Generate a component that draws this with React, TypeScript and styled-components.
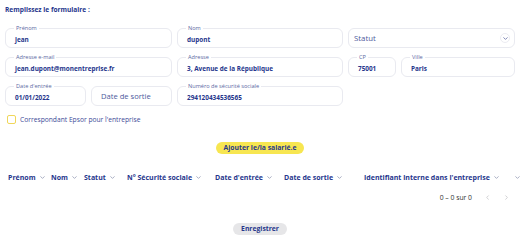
import { FC } from 'react';
import styled, { createGlobalStyle } from 'styled-components';

const GlobalStyle = createGlobalStyle`
  body {
    margin: 0;
    background: #ffffff;
    font-family: 'Open Sans', 'Liberation Sans', sans-serif;
  }
`;

const Page = styled.div`
  width: 522px;
  height: 249px;
  padding: 3px 7px 0 5px;
  box-sizing: border-box;
  color: #26368c;
`;

const Title = styled.h2`
  margin: 0 0 12px;
  height: 13px;
  font-size: 6.6px;
  font-weight: 700;
  line-height: 13px;
  color: #26368c;
`;

const FormGrid = styled.div`
  display: grid;
  grid-template-columns: 167px 166px 167px;
  column-gap: 5px;
  row-gap: 9px;
`;

const Split = styled.div<{ $cols: string }>`
  display: grid;
  grid-template-columns: ${(p) => p.$cols};
  column-gap: 5px;
`;

const Field = styled.div`
  position: relative;
  height: 20px;
  border: 1px solid #e9eaf0;
  border-radius: 6px;
  box-sizing: border-box;
  display: flex;
  align-items: center;
  padding: 0 9px;
`;

const FieldLabel = styled.span`
  position: absolute;
  top: -5px;
  left: 8px;
  padding: 0 2px;
  background: #ffffff;
  font-size: 5.6px;
  line-height: 8px;
  color: #5a679f;
`;

const Value = styled.span`
  font-size: 6.4px;
  font-weight: 700;
  color: #26368c;
  padding-top: 2px;
  white-space: nowrap;
`;

const Placeholder = styled.span<{ $size: number }>`
  font-size: ${(p) => p.$size}px;
  color: #4d5a9c;
  white-space: nowrap;
`;

const SelectField = styled(Field)`
  justify-content: space-between;
  padding: 0 4px 0 5px;
`;

const Chevron: FC<{ color?: string; size?: number }> = ({ color = '#9aa0b8', size = 7 }) => (
  <svg width={size} height={size} viewBox="0 0 10 10">
    <path d="M2.5 3.8 L5 6.3 L7.5 3.8" fill="none" stroke={color} strokeWidth="1.2" strokeLinecap="round" />
  </svg>
);

const RoundIcon = styled.span`
  width: 10px;
  height: 10px;
  border: 1px solid #ececf2;
  border-radius: 50%;
  box-sizing: border-box;
  display: flex;
  align-items: center;
  justify-content: center;
`;

const CheckRow = styled.label`
  display: flex;
  align-items: center;
  gap: 4px;
  margin: 9px 0 0 2px;
  font-size: 6.7px;
  color: #3d4b98;
`;

const Box = styled.span`
  width: 7px;
  height: 7px;
  border: 1px solid #f0d75a;
  border-radius: 2px;
`;

const Center = styled.div<{ $mt: number }>`
  display: flex;
  justify-content: center;
  margin-top: ${(p) => p.$mt}px;
`;

const Pill = styled.button<{ $bg: string }>`
  border: none;
  background: ${(p) => p.$bg};
  border-radius: 7px;
  height: 12px;
  padding: 0 8px;
  font-family: inherit;
  font-size: 6.8px;
  font-weight: 700;
  color: #26368c;
  line-height: 12px;
`;

const HeaderRow = styled.div`
  display: flex;
  align-items: center;
  margin: 17px 0 0 3px;
  height: 12px;
`;

const HeadCell = styled.div<{ $w: number }>`
  width: ${(p) => p.$w}px;
  flex-shrink: 0;
  display: flex;
  align-items: center;
  gap: 3px;
  font-size: 7px;
  font-weight: 700;
  white-space: nowrap;
  color: #26368c;
`;

const Pagination = styled.div`
  display: flex;
  justify-content: flex-end;
  align-items: center;
  gap: 12px;
  margin-top: 9px;
  padding-right: 5px;
  height: 10px;
  font-size: 6.8px;
  color: #333333;
`;

const Arrows = styled.div`
  display: flex;
  gap: 12px;
`;

const Arrow: FC<{ dir: 'left' | 'right' }> = ({ dir }) => (
  <svg width="7" height="7" viewBox="0 0 10 10">
    <path
      d={dir === 'left' ? 'M6.3 2.5 L3.8 5 L6.3 7.5' : 'M3.8 2.5 L6.3 5 L3.8 7.5'}
      fill="none"
      stroke="#c4c4c8"
      strokeWidth="1.1"
      strokeLinecap="round"
    />
  </svg>
);

const headers: { label: string; w: number }[] = [
  { label: 'Prénom', w: 43 },
  { label: 'Nom', w: 33 },
  { label: 'Statut', w: 43 },
  { label: 'N° Sécurité sociale', w: 88 },
  { label: "Date d'entrée", w: 69 },
  { label: 'Date de sortie', w: 80 },
  { label: "Identifiant interne dans l'entreprise", w: 150 },
];

const App: FC = () => {
  return (
    <Page>
      <GlobalStyle />
      <Title>Remplissez le formulaire :</Title>
      <FormGrid>
        <Field>
          <FieldLabel>Prénom</FieldLabel>
          <Value>jean</Value>
        </Field>
        <Field>
          <FieldLabel>Nom</FieldLabel>
          <Value>dupont</Value>
        </Field>
        <SelectField>
          <Placeholder $size={7.8}>Statut</Placeholder>
          <RoundIcon>
            <Chevron size={7} color="#6b74a8" />
          </RoundIcon>
        </SelectField>

        <Field>
          <FieldLabel>Adresse e-mail</FieldLabel>
          <Value>jean.dupont@monentreprise.fr</Value>
        </Field>
        <Field>
          <FieldLabel>Adresse</FieldLabel>
          <Value>3, Avenue de la République</Value>
        </Field>
        <Split $cols="48px 1fr">
          <Field>
            <FieldLabel>CP</FieldLabel>
            <Value>75001</Value>
          </Field>
          <Field>
            <FieldLabel>Ville</FieldLabel>
            <Value>Paris</Value>
          </Field>
        </Split>

        <Split $cols="1fr 1fr">
          <Field>
            <FieldLabel>Date d'entrée</FieldLabel>
            <Value>01/01/2022</Value>
          </Field>
          <Field>
            <Placeholder $size={7.6}>Date de sortie</Placeholder>
          </Field>
        </Split>
        <Field>
          <FieldLabel>Numéro de sécurité sociale</FieldLabel>
          <Value>294120434536565</Value>
        </Field>
      </FormGrid>

      <CheckRow>
        <Box />
        Correspondant Epsor pour l'entreprise
      </CheckRow>

      <Center $mt={18}>
        <Pill $bg="#f7e651">Ajouter le/la salarié.e</Pill>
      </Center>

      <HeaderRow>
        {headers.map((h) => (
          <HeadCell key={h.label} $w={h.w}>
            {h.label}
            <Chevron />
          </HeadCell>
        ))}
        <HeadCell $w={10}>
          <Chevron />
        </HeadCell>
      </HeaderRow>

      <Pagination>
        <span>0 – 0 sur 0</span>
        <Arrows>
          <Arrow dir="left" />
          <Arrow dir="right" />
        </Arrows>
      </Pagination>

      <Center $mt={21}>
        <Pill $bg="#e6e6e8">Enregistrer</Pill>
      </Center>
    </Page>
  );
};

export default App;
